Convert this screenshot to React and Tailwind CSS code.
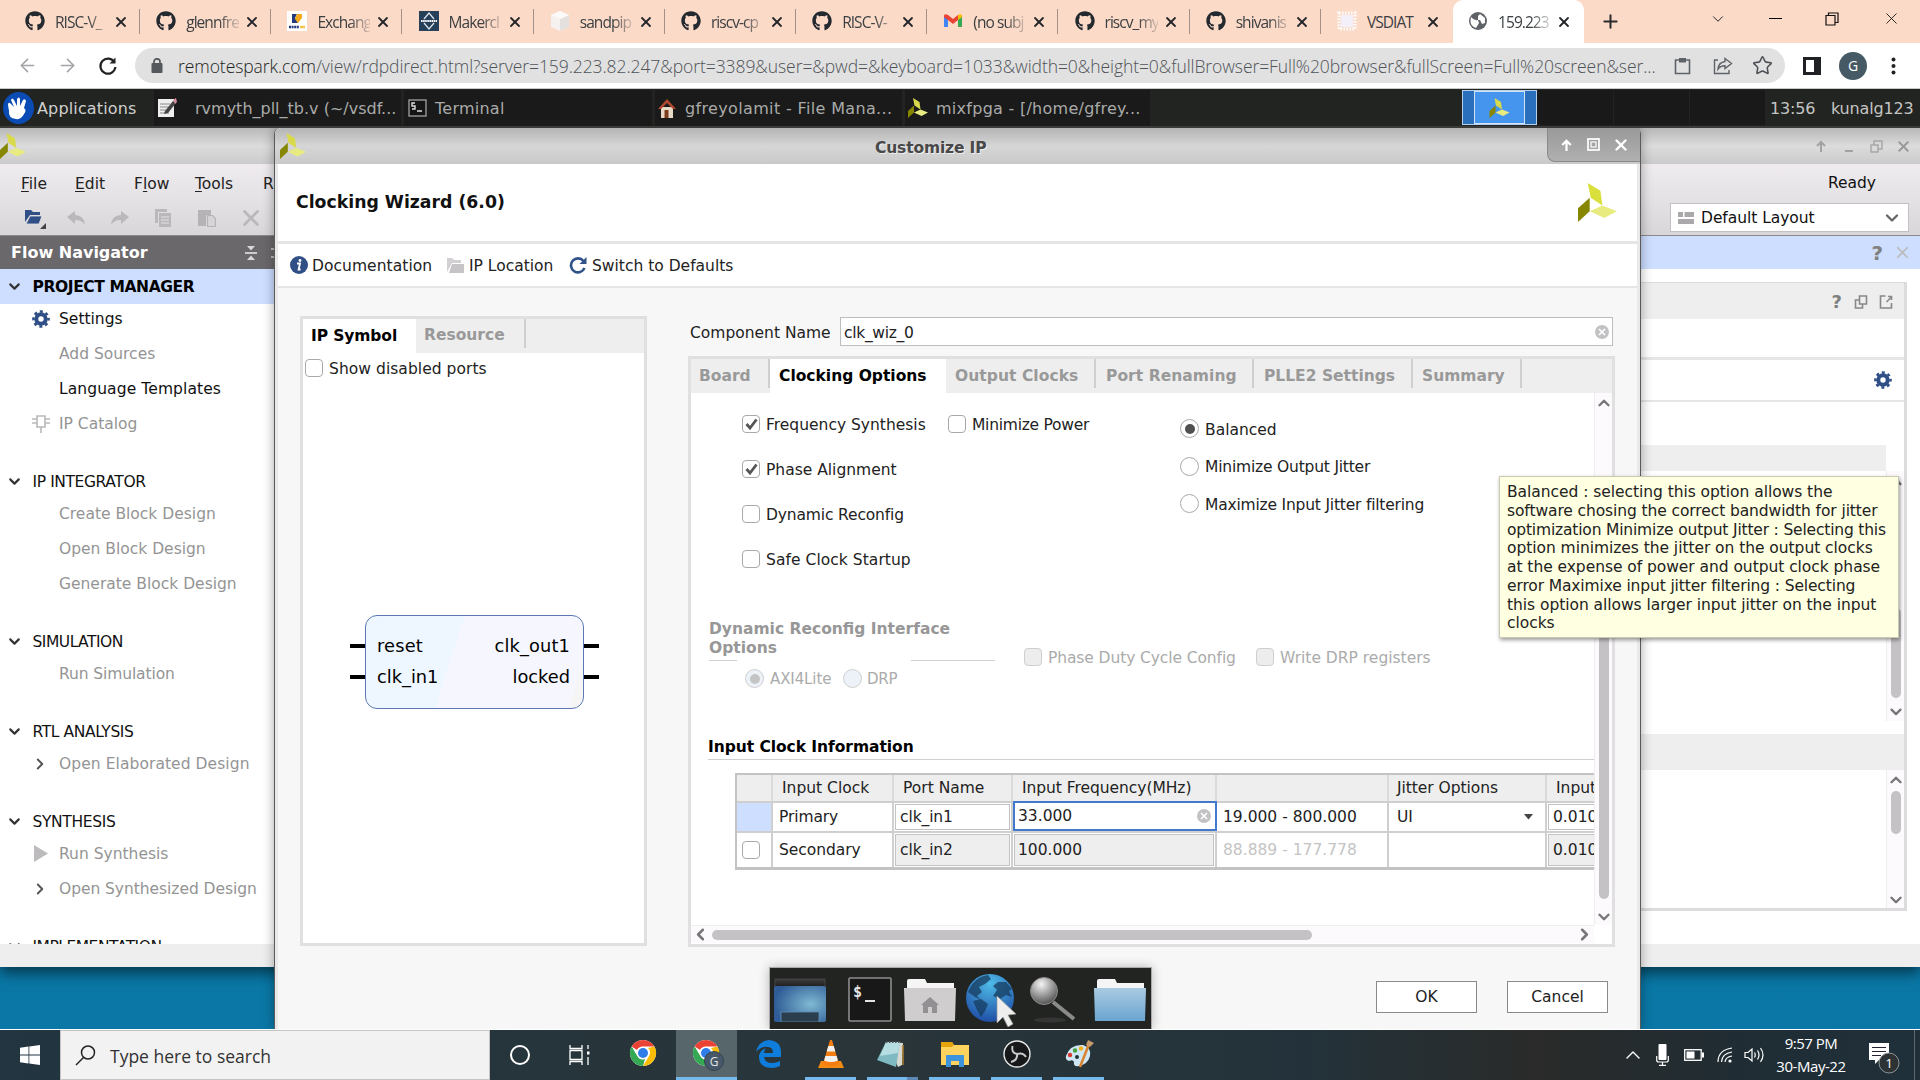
import React from "react";
import { FaGithub } from "react-icons/fa";
import { ChevronDown, ChevronUp, ChevronLeft, ChevronRight, X, Plus, ArrowLeft, ArrowRight, Star } from "lucide-react";

/* ---------- Browser chrome ---------- */

function Favicon({ kind }) {
  if (kind === "github") return <FaGithub size={20} color="#24292f" />;
  if (kind === "risc")
    return (
      <svg width="20" height="20" viewBox="0 0 20 20">
        <rect width="20" height="20" fill="#fff" />
        <path d="M5 3h5l-2 4 3 5H5z" fill="#233a7c" />
        <path d="M10 3h5v4l-4 5-3-4z" fill="#f6a81c" />
        <path d="M2 16h10" stroke="#233a7c" strokeWidth="2.4" strokeDasharray="2 .6" />
        <path d="M13 16h5" stroke="#f6c14c" strokeWidth="2.4" />
      </svg>
    );
  if (kind === "maker")
    return (
      <svg width="20" height="20" viewBox="0 0 20 20">
        <rect width="20" height="20" fill="#26405a" />
        <path d="M5 8l5-6 5 6M5 12l5 6 5-6" fill="none" stroke="#dfe7ee" strokeWidth="1.2" />
        <path d="M2 10h16" stroke="#fff" strokeWidth="1.8" strokeDasharray="1.6 .5" />
      </svg>
    );
  if (kind === "box")
    return (
      <svg width="20" height="20" viewBox="0 0 20 20">
        <path d="M10 0l9 4v12l-9 4-9-4V4z" fill="#f4f1ef" />
        <path d="M10 8l9-4v12l-9 4z" fill="#e3e0de" />
        <path d="M10 0l9 4-9 4-9-4z" fill="#fbfaf9" />
      </svg>
    );
  if (kind === "gmail")
    return (
      <svg width="20" height="20" viewBox="0 0 20 20">
        <path d="M1 5v11h4V8z" fill="#4285f4" />
        <path d="M15 8v8h4V5z" fill="#34a853" />
        <path d="M15 4v5l4-3V4.500q-1-2-4-.5z" fill="#fbbc04" />
        <path d="M1 4.500q1-2 4-.5l5 4 5-4v5l-5 4-5-4-4-3z" fill="#ea4335" />
      </svg>
    );
  if (kind === "chip")
    return (
      <svg width="20" height="20" viewBox="0 0 20 20">
        <rect x="2" y="2" width="16" height="16" fill="none" stroke="#fff" strokeWidth="3" strokeDasharray="1.500 1.500" />
        <rect x="4" y="4" width="12" height="12" fill="#f3f0fa" />
      </svg>
    );
  return (
    <svg width="20" height="20" viewBox="0 0 20 20">
      <circle cx="10" cy="10" r="9" fill="#5f6368" />
      <path d="M3 6q3 4 7 3l1 3-3 5Q2 15 2.500 9zM12 3l5 4v5l-3 1-2-4h-2V5z" fill="#fff" />
    </svg>
  );
}

const TABS = [
  ["github", "RISC-V_"],
  ["github", "glennfre"],
  ["risc", "Exchang"],
  ["maker", "Makercl"],
  ["box", "sandpip"],
  ["github", "riscv-cp"],
  ["github", "RISC-V-"],
  ["gmail", "(no subj"],
  ["github", "riscv_my"],
  ["github", "shivanis"],
  ["chip", "VSDIAT"],
  ["globe", "159.223"],
];

function TabStrip() {
  return (
    <div className="flex h-[43px] bg-[#fcdac8] pl-[10px]">
      {TABS.map(([icon, label], i) => {
        const active = i === 11;
        return (
          <div key={i} className={`flex h-[43px] w-[131.2px] shrink-0 items-center pl-[15px] ${active ? "rounded-t-[10px] bg-white" : ""}`}>
            <span className="-mt-px"><Favicon kind={icon} /></span>
            <span className={`ml-[10px] w-[53px] overflow-hidden whitespace-nowrap font-['Open_Sans'] text-[15.5px] leading-[22px] tracking-[-0.95px] text-[#3c4043] ${i === 10 ? "" : "[mask-image:linear-gradient(to_right,#000_62%,rgba(0,0,0,0.15)_100%)]"}`}>{label}</span>
            <X className="ml-[5px]" size={16} strokeWidth={2.700} color="#24262a" />
            {i < 10 && <span className="ml-[10px] h-[25px] w-px bg-[#a39088]" />}
          </div>
        );
      })}
      <div className="flex h-[43px] grow items-center pl-[16px]">
        <Plus size={21} strokeWidth={2.300} color="#2b2b2b" />
        <div className="ml-auto flex items-center pr-[19px] pb-[6px]">
          <ChevronDown size={18} strokeWidth={1.300} color="#222" />
          <span className="ml-[42px] h-px w-[13px] bg-black" />
          <svg className="ml-[43px]" width="14" height="14" viewBox="0 0 14 14" fill="none" stroke="#111" strokeWidth="1.200">
            <path d="M1 3.500h9V13H1zM3.500 3.500V1H13v9.500h-3" />
          </svg>
          <X className="ml-[43px]" size={19} strokeWidth={1.100} color="#111" />
        </div>
      </div>
    </div>
  );
}

function AddressBar() {
  return (
    <div className="flex h-[46px] items-center border-b border-[#c9c9c9] bg-white">
      <ArrowLeft className="ml-[17px]" size={21} strokeWidth={1.800} color="#a2a4a7" />
      <ArrowRight className="ml-[19px]" size={21} strokeWidth={1.800} color="#a2a4a7" />
      <svg className="ml-[20px]" width="20" height="20" viewBox="0 0 20 20" fill="none" stroke="#222" strokeWidth="2.200">
        <path d="M16.500 6.500A7.500 7.500 0 1 0 17.400 11" />
        <path d="M17.500 1.500v6h-6z" fill="#222" stroke="none" />
      </svg>
      <div className="ml-[17px] flex h-[35px] w-[1650px] items-center rounded-full bg-[#e1e1e1]">
        <svg className="ml-[16px]" width="12" height="15" viewBox="0 0 12 15">
          <rect x="0.500" y="5" width="11" height="10" rx="1" fill="#55585c" />
          <path d="M3 6V3.800a3 3 0 0 1 6 0V6" fill="none" stroke="#55585c" strokeWidth="1.700" />
        </svg>
        <span className="ml-[15px] w-[1487px] pt-px whitespace-nowrap font-['Open_Sans'] text-[17.5px] leading-[26px] font-light tracking-[-0.07px] text-[#4f5358]">
          <span className="text-[#1d1f21]">remotespark.com</span>
          /view/rdpdirect.html?server=159.223.82.247&amp;port=3389&amp;user=&amp;pwd=&amp;keyboard=1033&amp;width=0&amp;height=0&amp;fullBrowser=Full%20browser&amp;fullScreen=Full%20screen&amp;ser...
        </span>
        <svg className="ml-[9px]" width="17" height="18" viewBox="0 0 17 18" fill="none" stroke="#5f6368" strokeWidth="1.600">
          <path d="M1.500 3h14v13.500h-14z" />
          <path d="M5 1h7v4.500H5z" fill="#5f6368" stroke="none" />
        </svg>
        <svg className="ml-[22px]" width="20" height="18" viewBox="0 0 20 18" fill="none" stroke="#5f6368" strokeWidth="1.400">
          <path d="M5 3H1.500v13.500H16V13" />
          <path d="M12 1.500l6.500 5-6.500 5V8.700Q7.500 8.500 5 12q.500-6.500 7-7.500z" />
        </svg>
        <Star className="ml-[19px]" size={21} strokeWidth={1.800} color="#4d5156" />
      </div>
      <svg className="ml-[18px]" width="18" height="18" viewBox="0 0 18 18">
        <rect width="18" height="18" fill="#1f2124" />
        <rect x="3" y="3" width="8" height="12" fill="#fff" />
      </svg>
      <span className="ml-[18px] flex size-[28px] items-center justify-center rounded-full bg-[#455a64] font-['Open_Sans'] text-[14px] leading-[18px] text-white">G</span>
      <svg className="ml-[24px]" width="5" height="18" viewBox="0 0 5 18" fill="#222">
        <circle cx="2.500" cy="2.500" r="2" /><circle cx="2.500" cy="9" r="2" /><circle cx="2.500" cy="15.500" r="2" />
      </svg>
    </div>
  );
}

/* ---------- Remote desktop panel ---------- */

function VivadoLogo({ w, h, dim }) {
  return (
    <svg width={w} height={h} viewBox="0 0 40 40">
      <path d="M10 0l13 8 2 15-12-8z" fill={dim ? "#d8da4c" : "#d9e03b"} />
      <path d="M0 26l12-11v14L0 40z" fill="#868600" />
      <path d="M12 29l13-6 15 6-13 7z" fill="#e8ec80" />
    </svg>
  );
}

function PanelButton({ icon, label, className, textClass }) {
  return (
    <div className={`flex h-[36px] items-center bg-[#191a19] ${className}`}>
      {icon}
      <span className={`pt-[2px] leading-[20px] whitespace-nowrap ${textClass}`}>{label}</span>
    </div>
  );
}

function XfcePanel() {
  return (
    <div className="flex h-[39px] items-center border-b-2 border-[#3a3a39] bg-[#222421] text-[16px] text-[#a9aaa9]">
      <svg className="ml-[3px]" width="31" height="32" viewBox="0 0 31 32">
        <ellipse cx="15.500" cy="16" rx="15.500" ry="16" fill="#0a4bb4" />
        <path d="M5 13q0-3 2-2l4 4-3-7q1-3 3 0l3 6V7q2-3 3 0v7l3-6q2-2 3 1l-2 7q3 2 0 6-3 6-8 5-8-1-7-8z" fill="#fff" />
      </svg>
      <span className="ml-[3px] w-[103px] pt-[2px] text-[16px] leading-[20px] tracking-[0.15px] text-[#cfd0cf]">Applications</span>
      <PanelButton
        className="ml-[14px] w-[247px]"
        textClass="ml-[18px]"
        label="rvmyth_pll_tb.v (~/vsdf..."
        icon={
          <svg className="ml-[3px]" width="20" height="21" viewBox="0 0 20 21">
            <rect x="1" y="2" width="16" height="18" fill="#eee" />
            <path d="M3 7h10M3 10h10M3 13h8M3 16h9" stroke="#888" strokeWidth="1.200" />
            <path d="M8 14l8-10 3 2-8 10-4 1z" fill="#444" />
            <path d="M16 3l3-2 1 4-2 2z" fill="#d88fa2" />
          </svg>
        }
      />
      <PanelButton
        className="ml-[3px] w-[248px]"
        textClass="ml-[8px] tracking-[0.25px]"
        label="Terminal"
        icon={
          <svg className="ml-[4px]" width="19" height="18" viewBox="0 0 19 18">
            <rect x="1" y="1" width="17" height="16" fill="#151515" stroke="#999" strokeWidth="1.400" />
            <path d="M7 4H4v3h3v3H4M9 12h5" fill="none" stroke="#ddd" strokeWidth="1.400" />
          </svg>
        }
      />
      <PanelButton
        className="ml-[3px] w-[247px]"
        textClass="ml-[9px] tracking-[0.35px]"
        label="gfreyolamit - File Mana..."
        icon={
          <svg className="ml-[3px]" width="18" height="20" viewBox="0 0 18 20">
            <path d="M3 9h12v11H3z" fill="#e7d9c5" />
            <path d="M9 1l9 10h-3L9 5l-6 6H0z" fill="#b0482f" />
            <path d="M6.500 12h4v8h-4z" fill="#7c3d1e" />
          </svg>
        }
      />
      <PanelButton
        className="ml-[3px] w-[245px]"
        textClass="ml-[8px] tracking-[0.27px]"
        label="mixfpga - [/home/gfrey..."
        icon={<span className="ml-[3px]"><VivadoLogo w={20} h={20} dim /></span>}
      />
      <div className="ml-[312px] flex h-[35px]">
        <div className="flex w-[75px] justify-center border border-[#b4d0ee] bg-[#2a6fbb] px-[11px]">
          <div className="flex w-full items-center justify-center border border-[#d4e3f4] bg-[#4595ef]">
            <VivadoLogo w={21} h={20} dim />
          </div>
        </div>
        <div className="w-[76px] bg-[#181918]" />
        <div className="ml-px w-[75px] bg-[#181918]" />
        <div className="ml-px w-[75px] bg-[#181918]" />
      </div>
      <span className="ml-[5px] w-[61px] pt-[2px] text-[16px] tracking-[-0.15px] text-[#c4c5c4]">13:56</span>
      <span className="pt-[2px] text-[16px] leading-[20px] tracking-[-0.15px] text-[#c4c5c4]">kunalg123</span>
    </div>
  );
}

/* ---------- Vivado main window ---------- */

function NavHeader({ children, first }) {
  return (
    <div className={`flex h-[35px] shrink-0 items-center pl-[6px] ${first ? "bg-[#cddeff]" : "mt-[23px]"}`}>
      <ChevronDown size={17} strokeWidth={3} color="#333" />
      <span className={`ml-[9.5px] pt-[2px] whitespace-nowrap ${first ? "font-bold text-[15.5px] tracking-[-0.4px] text-black" : "text-[15.5px] tracking-[-0.5px] text-[#111]"}`}>{children}</span>
    </div>
  );
}

function NavItem({ children, icon, on, first }) {
  return (
    <div className={`flex h-[35px] shrink-0 items-center ${first ? "-mt-[3px]" : ""}`}>
      <span className="flex w-[59px] justify-end pr-[9px]">{icon}</span>
      <span className={`pt-[2px] leading-[19px] whitespace-nowrap text-[15.5px] ${on ? "text-[#111]" : "text-[#949494]"}`}>{children}</span>
    </div>
  );
}

function Gear() {
  return (
    <svg width="18" height="18" viewBox="0 0 18 18">
      <circle cx="9" cy="9" r="4.700" fill="none" stroke="#2f4f86" strokeWidth="4" />
      <circle cx="9" cy="9" r="7.500" fill="none" stroke="#2f4f86" strokeWidth="2.600" strokeDasharray="2.950 2.940" strokeDashoffset="1.400" />
    </svg>
  );
}

const Expander = () => <ChevronRight className="mr-px" size={18} strokeWidth={2.500} color="#555" />;

function FlowNavigator() {
  return (
    <div className="flex h-[732px] w-[276px] flex-col">
      <div className="flex h-[34px] shrink-0 items-center border-t border-[#8c8a8c] bg-[#6a686a]">
        <span className="ml-[11px] w-[234px] text-[16px] leading-[20px] font-bold text-white">Flow Navigator</span>
        <svg width="12" height="14" viewBox="0 0 12 14">
          <path d="M0 7h12" stroke="#d8d8d8" strokeWidth="1.800" />
          <path d="M2 0h8L6 4.500zM2 14h8L6 9.500z" fill="#d8d8d8" />
        </svg>
        <span className="ml-[14px] h-[10px] w-[3px] border-y-2 border-[#bbb]" />
      </div>
      <div className="flex h-[675px] shrink-0 flex-col overflow-hidden bg-white">
        <NavHeader first>PROJECT MANAGER</NavHeader>
        <NavItem first on icon={<Gear />}>Settings</NavItem>
        <NavItem>Add Sources</NavItem>
        <NavItem on><span className="tracking-[0.1px]">Language Templates</span></NavItem>
        <NavItem
          icon={
            <svg width="18" height="18" viewBox="0 0 18 18" fill="none" stroke="#b9b9b9" strokeWidth="1.600">
              <path d="M5 1h8v11H5zM0 4h5M0 8h5M13 4h5M13 8h5M9 12v6" />
            </svg>
          }
        >IP Catalog</NavItem>
        <NavHeader><span className="tracking-[-0.4px]">IP INTEGRATOR</span></NavHeader>
        <NavItem first>Create Block Design</NavItem>
        <NavItem>Open Block Design</NavItem>
        <NavItem>Generate Block Design</NavItem>
        <NavHeader>SIMULATION</NavHeader>
        <NavItem first><span className="tracking-[-0.1px]">Run Simulation</span></NavItem>
        <NavHeader><span className="tracking-[-0.4px]">RTL ANALYSIS</span></NavHeader>
        <NavItem first icon={<Expander />}><span className="tracking-[0.07px]">Open Elaborated Design</span></NavItem>
        <NavHeader><span className="tracking-[-0.35px]">SYNTHESIS</span></NavHeader>
        <NavItem first icon={<svg className="mr-[2px]" width="14" height="17" viewBox="0 0 14 17"><path d="M0 0l14 8.500L0 17z" fill="#bdbbbd" /></svg>}>Run Synthesis</NavItem>
        <NavItem icon={<Expander />}><span className="tracking-[-0.05px]">Open Synthesized Design</span></NavItem>
        <NavHeader>IMPLEMENTATION</NavHeader>
      </div>
      <div className="h-[23px] shrink-0 bg-[#eeeeee]" />
    </div>
  );
}

function MainWindowRight() {
  return (
    <div className="flex h-[732px] w-[279px] flex-col bg-white">
      <div className="flex h-[34px] shrink-0 items-center justify-end border-t border-[#8c8a8c] bg-[#cddeff] pr-[8px]">
        <span className="text-[20px] font-bold text-[#808080]">?</span>
        <X className="ml-[10px]" size={19} strokeWidth={2.200} color="#bbb" />
      </div>
      <div className="mt-[13px] mr-[13px] flex h-[629px] shrink-0 flex-col border-t border-r-[3px] border-b-[3px] border-[#dcdcdc]">
        <div className="flex h-[36px] shrink-0 items-center justify-end bg-[#eeeeee] pt-px pr-[11px] text-[#808080]">
          <span className="text-[18px] font-bold">?</span>
          <svg className="ml-[12px]" width="14" height="14" viewBox="0 0 13 14" fill="none" stroke="#888" strokeWidth="1.600">
            <path d="M5 1h7v8H5zM5 5H1v8h7V9" />
          </svg>
          <svg className="ml-[11px]" width="14" height="14" viewBox="0 0 13 14" fill="none" stroke="#888" strokeWidth="1.600">
            <path d="M6 1H1v12h11V8M7 7l5-5M8.500 1.500H12V5" />
          </svg>
        </div>
        <div className="h-[38px] shrink-0 bg-white" />
        <div className="flex h-[45px] shrink-0 items-center justify-end border-t-[3px] border-b-2 border-[#e6e6e6] pr-[12px]">
          <Gear />
        </div>
        <div className="mt-[43px] mr-[18px] h-[26px] shrink-0 bg-[#eeeeee]" />
        <div className="flex h-[250px] shrink-0 justify-end">
          <div className="flex w-[18px] flex-col items-center border-l border-[#eee] bg-[#fcfafc]">
            <ChevronUp className="mt-[2px]" size={18} strokeWidth={3.200} color="#777" />
            <span className="mt-[117px] h-[92px] w-[10px] rounded-full bg-[#c4c2c5]" />
            <ChevronDown className="mt-[5px]" size={18} strokeWidth={3.200} color="#777" />
          </div>
        </div>
        <div className="mt-[13px] h-[36px] shrink-0 bg-[#eeeeee]" />
        <div className="flex grow justify-end">
          <div className="flex w-[18px] flex-col items-center border-l border-[#eee] bg-[#fcfafc]">
            <ChevronUp className="mt-px" size={18} strokeWidth={3.200} color="#777" />
            <span className="mt-[2px] h-[43px] w-[10px] rounded-full bg-[#c4c2c5]" />
            <ChevronDown className="mt-auto -mb-px" size={18} strokeWidth={3.200} color="#777" />
          </div>
        </div>
      </div>
      <div className="mt-auto h-[23px] shrink-0 bg-[#eeeeee]" />
    </div>
  );
}

const MENUS = [
  ["F", "ile", "", "w-[54px]"],
  ["E", "dit", "", "w-[59px]"],
  ["l", "ow", "F", "w-[61px]"],
  ["T", "ools", "", "w-[68px]"],
  ["R", "", "", "w-[20px] no-underline"],
];

function ToolIcons() {
  return (
    <div className="flex items-center">
      <svg width="24" height="24" viewBox="0 0 24 24">
        <path d="M1 16V4h6l2 2h7v3H6z" fill="#2f4f86" />
        <path d="M6 10h12l-3 8H2z" fill="#2f4f86" stroke="#e4e2e4" strokeWidth=".8" />
        <path d="M22 17v6h-6z" fill="#444" />
      </svg>
      <svg className="ml-[19px]" width="18" height="14" viewBox="0 0 18 14"><path d="M0 6l8-6v4q9 0 10 10-3-5-10-5v4z" fill="#bab8ba" /></svg>
      <svg className="ml-[26px]" width="18" height="14" viewBox="0 0 18 14"><path d="M18 6l-8-6v4Q1 4 0 14q3-5 10-5v4z" fill="#bab8ba" /></svg>
      <svg className="ml-[26px]" width="17" height="18" viewBox="0 0 17 18"><path d="M0 0h12v3H3v11H0z" fill="#bab8ba" /><path d="M4 4h12v14H4z" fill="#bab8ba" /><path d="M6 8h8M6 11h8M6 14h8" stroke="#e4e2e4" strokeWidth="1" /></svg>
      <svg className="ml-[26px]" width="18" height="18" viewBox="0 0 18 18"><path d="M0 1h13v5H8v11H0z" fill="#b5b3b5" /><path d="M9.500 6.500h5l3 3v8h-8z" fill="#d6d4d6" stroke="#b5b3b5" strokeWidth="1.200" /></svg>
      <X className="ml-[22px]" size={26} strokeWidth={2.600} color="#bab8ba" />
    </div>
  );
}

function MainWindow() {
  return (
    <div className="absolute top-0 left-0 flex h-[839px] w-[1920px] flex-col shadow-[0_6px_14px_rgba(0,0,0,0.55)]">
      <div className="flex h-[36px] shrink-0 items-center bg-gradient-to-b from-[#b8b8b8] via-[#dcdcdc] to-[#cbcbcb]">
        <VivadoLogo w={26} h={26} dim />
        <div className="ml-auto flex items-center pr-[8px]">
          <svg width="10" height="12" viewBox="0 0 10 12" fill="none" stroke="#a2a2a2" strokeWidth="2"><path d="M5 12V2M1 6l4-4 4 4" /></svg>
          <span className="mt-[9px] ml-[19px] h-[2px] w-[8px] bg-[#a2a2a2]" />
          <svg className="ml-[17px]" width="13" height="13" viewBox="0 0 13 13" fill="none" stroke="#a8a8a8" strokeWidth="1.500"><path d="M1 5h7v7H1zM4 5V1h8v8H8" /></svg>
          <X className="ml-[12px]" size={17} strokeWidth={2.800} color="#999" />
        </div>
      </div>
      <div className="flex h-[71px] shrink-0 justify-between bg-gradient-to-b from-[#efebef] via-[#e4e2e4] to-[#d8d6d8]">
        <div className="flex w-[276px] flex-col overflow-hidden">
          <div className="flex h-[38px] items-center pt-[2px] pl-[21px] text-[15.5px] leading-[20px] text-[#222]">
            {MENUS.map(([u, rest, pre, w]) => (
              <span key={u} className={`shrink-0 ${w}`}>{pre}{rest ? <u className="underline-offset-2">{u}</u> : u}{rest}</span>
            ))}
          </div>
          <div className="flex h-[32px] items-center pl-[24px]"><ToolIcons /></div>
        </div>
        <div className="flex w-[250px] flex-col items-end">
          <span className="mt-[8px] mr-[44px] text-[15.5px] leading-[22px] text-[#111]">Ready</span>
          <div className="mt-[9px] mr-[11px] flex h-[29px] w-[239px] items-center border border-[#c2c0c2] bg-white">
            <svg className="ml-[7px]" width="16" height="12" viewBox="0 0 16 12" fill="#aaa8aa"><path d="M0 0h5v5H0zM6.500 0H16v5H6.500zM0 7h16v5H0z" /></svg>
            <span className="ml-[7px] pt-px text-[15.5px] leading-[20px] tracking-[-0.05px] text-[#111]">Default Layout</span>
            <ChevronDown className="mr-[6px] ml-auto" size={20} strokeWidth={2.800} color="#666" />
          </div>
        </div>
      </div>
      <div className="flex justify-between bg-white">
        <FlowNavigator />
        <MainWindowRight />
      </div>
    </div>
  );
}

/* ---------- Customize IP dialog ---------- */

function Check({ on, off }) {
  return (
    <span className={`flex size-[18px] shrink-0 items-center justify-center rounded-[4px] border-[1.5px] ${off ? "border-[#cfcfcf] bg-[#ededed]" : "border-[#a9a9a9] bg-white"}`}>
      {on && <svg width="13" height="12" viewBox="0 0 13 12"><path d="M1.500 6l3.500 4 6.500-8.500" fill="none" stroke="#555" strokeWidth="2.800" /></svg>}
    </span>
  );
}

function Radio({ on, off }) {
  return (
    <span className={`flex size-[19px] shrink-0 items-center justify-center rounded-full border-[1.5px] ${off ? "border-[#cfcfcf] bg-[#edf1f8]" : "border-[#a9a9a9] bg-white"}`}>
      {on && <span className={`size-[10px] rounded-full ${off ? "bg-[#c4c4c4]" : "bg-[#505050]"}`} />}
    </span>
  );
}

function ClearIcon() {
  return (
    <svg width="14" height="14" viewBox="0 0 14 14">
      <circle cx="7" cy="7" r="7" fill="#c2c2c4" />
      <path d="M4 4l6 6M10 4l-6 6" stroke="#fff" strokeWidth="1.700" />
    </svg>
  );
}

function IpSymbolPanel() {
  return (
    <div className="flex h-[630px] w-[347px] shrink-0 flex-col border-[3px] border-[#e0e0e0] bg-white">
      <div className="flex h-[34px] shrink-0 bg-[#eeeeee] text-[15.5px] font-bold">
        <span className="flex w-[113px] items-center bg-white pt-px pl-[8px] tracking-[-0.1px] text-black">IP Symbol</span>
        <span className="mb-[5px] flex w-[110px] items-center border-r-2 border-[#cfcfcf] pt-[5px] pl-[8px] text-[#999]">Resource</span>
      </div>
      <div className="mt-[5px] flex h-[20px] items-center pl-[2px] text-[15.5px] text-[#222]">
        <Check /><span className="ml-[6px] pt-[2px] leading-[20px] tracking-[0.05px]">Show disabled ports</span>
      </div>
      <div className="mt-[237px] flex items-center justify-center pl-[2px] text-[17.8px] text-black">
        <Stubs />
        <div className="flex h-[94px] w-[219px] justify-between rounded-[12px] border-[1.5px] border-[#5b78b4] bg-[linear-gradient(108deg,#eef6ff_0%,#eef6ff_40%,#f6f7fe_40%,#f6f7fe_94%,#f5f5f6_94%)] px-[11px] pt-[15px] leading-[30.5px]">
          <div className="flex flex-col"><span className="tracking-[0.2px]">reset</span><span>clk_in1</span></div>
          <div className="flex flex-col items-end pr-[2px]"><span className="tracking-[0.15px]">clk_out1</span><span>locked</span></div>
        </div>
        <Stubs />
      </div>
    </div>
  );
}

function Stubs() {
  return (
    <div className="flex h-[94px] w-[15px] flex-col gap-[27px] pt-[29px]">
      <span className="h-[4px] bg-black" />
      <span className="h-[4px] bg-black" />
    </div>
  );
}

const OPTION_TABS = [
  ["Board", "w-[79px] pl-[8px]"],
  ["Clocking Options", ""],
  ["Output Clocks", "w-[150px] pl-[9px] tracking-[0.05px]"],
  ["Port Renaming", "w-[158px] pl-[10px] tracking-[0.05px]"],
  ["PLLE2 Settings", "w-[159px] pl-[10px]"],
  ["Summary", "w-[109px] pl-[9px]"],
];

function ClockTable() {
  const th = "flex h-[26px] items-center border-r-2 border-[#dadada] whitespace-nowrap bg-[#eeeeee]";
  const td1 = "flex h-[30px] items-center border-t-2 border-r-2 border-[#cfcfcf] whitespace-nowrap";
  const td2 = "flex h-[36px] items-center border-t-2 border-r-2 border-[#cfcfcf] whitespace-nowrap";
  return (
    <div className="ml-[44px] grid w-[900px] grid-cols-[36px_121px_119px_204px_172px_158px_120px] border-t-2 border-b-[3px] border-l-2 border-[#c3c3c3] text-[15.5px] leading-[20px] text-[#222]">
      <div className={th} />
      <div className={`${th} pl-[9px]`}>Input Clock</div>
      <div className={`${th} pl-[9px]`}>Port Name</div>
      <div className={`${th} pl-[9px] tracking-[-0.05px]`}>Input Frequency(MHz)</div>
      <div className={th} />
      <div className={`${th} pl-[8px] tracking-[-0.05px]`}>Jitter Options</div>
      <div className={`${th} pl-[9px]`}>Input Jitter</div>

      <div className={`${td1} bg-[#cddeff]`} />
      <div className={`${td1} pl-[6px] tracking-[-0.1px]`}>Primary</div>
      <div className={`${td1} p-px`}><span className="flex h-[26px] w-full items-center overflow-hidden border border-[#c3c3c3] pl-[4px] tracking-[-0.1px]">clk_in1</span></div>
      <div className="flex h-[30px]">
        <div className="flex h-[30px] w-full items-center border-[2.500px] border-[#4279cf] pr-[4px] pl-[3px]">33.000<span className="ml-auto"><ClearIcon /></span></div>
      </div>
      <div className={`${td1} pl-[6px]`}>19.000 - 800.000</div>
      <div className={`${td1} pl-[8px]`}>UI<svg className="mr-[12px] ml-auto" width="9" height="6" viewBox="0 0 9 6"><path d="M0 0h9L4.500 5.500z" fill="#444" /></svg></div>
      <div className={`${td1} p-px`}><span className="flex h-[26px] w-full items-center border border-[#c3c3c3] pl-[4px]">0.010</span></div>

      <div className={`${td2} pl-[5px]`}><Check /></div>
      <div className={`${td2} pl-[6px] tracking-[-0.05px]`}>Secondary</div>
      <div className={`${td2} p-px`}><span className="flex h-[32px] w-full items-center border-[1.5px] border-[#c3c3c3] bg-[#eee] pl-[4px] tracking-[-0.1px]">clk_in2</span></div>
      <div className={`${td2} p-px`}><span className="flex h-[32px] w-full items-center border-[1.5px] border-[#c3c3c3] bg-[#eee] pl-[3px]">100.000</span></div>
      <div className={`${td2} pl-[6px] text-[#c4c4c4]`}>88.889 - 177.778</div>
      <div className={td2} />
      <div className={`${td2} p-px`}><span className="flex h-[32px] w-full items-center border-[1.5px] border-[#c3c3c3] bg-[#eee] pl-[4px]">0.010</span></div>
    </div>
  );
}

function OptionsForm() {
  return (
    <div className="flex h-[532px] w-[903px] flex-col overflow-hidden text-[15.5px] text-[#222]">
      <div className="flex h-[189px] shrink-0 pt-[8px]">
        <div className="grid h-[180px] w-[438px] grid-cols-[206px_1fr] grid-rows-4 content-start pl-[51px]">
          <Option mark={<Check on />}>Frequency Synthesis</Option>
          <Option mark={<Check />}><span className="tracking-[-0.25px]">Minimize Power</span></Option>
          <Option mark={<Check on />} full>Phase Alignment</Option>
          <Option mark={<Check />} full><span className="tracking-[-0.15px]">Dynamic Reconfig</span></Option>
          <Option mark={<Check />} full><span className="tracking-[0.05px]">Safe Clock Startup</span></Option>
        </div>
        <div className="mt-[9px] ml-[51px] flex flex-col leading-[20px]">
          <div className="flex h-[37.5px] items-center"><Radio on /><span className="ml-[6px] pt-[2px]">Balanced</span></div>
          <div className="flex h-[37.5px] items-center"><Radio /><span className="ml-[6px] pt-[2px] tracking-[-0.2px]">Minimize Output Jitter</span></div>
          <div className="flex h-[37.5px] items-center"><Radio /><span className="ml-[6px] pt-[2px] tracking-[-0.2px]">Maximize Input Jitter filtering</span></div>
        </div>
      </div>
      <div className="mt-[38px] flex h-[75px] shrink-0 pl-[18px] text-[#ababab]">
        <div className="flex w-[286px] flex-col">
          <span className="leading-[19px] font-bold text-[#979797]">Dynamic Reconfig Interface<br />Options</span>
          <div className="mt-[2px] flex justify-between"><span className="h-px w-[28px] bg-[#cfcfcf]" /><span className="h-px w-[84px] bg-[#cfcfcf]" /></div>
          <div className="mt-[8px] flex items-center pl-[36px] text-[15px]">
            <Radio on off /><span className="ml-[6px] w-[73px] pt-[2px] tracking-[-0.1px]">AXI4Lite</span>
            <Radio off /><span className="ml-[5px] pt-[2px] tracking-[-0.2px]">DRP</span>
          </div>
        </div>
        <div className="ml-[29px] flex h-[74px] items-center leading-[20px]">
          <Check off /><span className="ml-[6px] w-[208px] pt-[2px] whitespace-nowrap tracking-[-0.1px]">Phase Duty Cycle Config</span>
          <Check off /><span className="ml-[6px] pt-[2px] whitespace-nowrap">Write DRP registers</span>
        </div>
      </div>
      <div className="mt-[43px] ml-[17px] h-[22px] shrink-0 border-b border-[#cfcfcf] leading-[18px] font-bold tracking-[-0.05px] text-black">Input Clock Information</div>
      <div className="mt-[13px] shrink-0"><ClockTable /></div>
    </div>
  );
}

function Option({ mark, children, full }) {
  return (
    <div className={`flex h-[45px] items-center whitespace-nowrap ${full ? "col-span-2" : ""}`}>
      {mark}<span className="ml-[6px] pt-[2px] leading-[20px]">{children}</span>
    </div>
  );
}

function OptionsPanel() {
  return (
    <div className="flex h-[591px] w-[927px] flex-col border-[3px] border-[#e0e0e0] bg-white">
      <div className="flex h-[34px] shrink-0 bg-[#eeeeee] text-[15.5px] leading-[20px] font-bold text-[#999]">
        {OPTION_TABS.map(([label, cls]) =>
          label === "Clocking Options" ? (
            <span key={label} className="flex w-[176px] items-center bg-white pl-[9px] text-black">{label}</span>
          ) : (
            <span key={label} className={`mb-[5px] flex items-center border-r-2 border-[#cfcfcf] pt-[5px] whitespace-nowrap ${cls}`}>{label}</span>
          )
        )}
      </div>
      <div className="flex h-[532px] shrink-0">
        <OptionsForm />
        <div className="flex w-[18px] flex-col items-center border-l border-[#eee] bg-[#fcfafc]">
          <ChevronUp className="mt-px" size={18} strokeWidth={3.200} color="#777" />
          <span className="mt-[199px] h-[288px] w-[10px] rounded-full bg-[#c4c2c5]" />
          <ChevronDown className="mt-auto -mb-px" size={18} strokeWidth={3.200} color="#777" />
        </div>
      </div>
      <div className="flex h-[18px] w-[903px] items-center border-t border-[#eee] bg-[#fcfafc]">
        <ChevronLeft size={19} strokeWidth={3.200} color="#777" />
        <span className="ml-[2px] h-[10px] w-[600px] rounded-full bg-[#c4c2c5]" />
        <ChevronRight className="ml-auto" size={19} strokeWidth={3.200} color="#777" />
      </div>
    </div>
  );
}

function Dialog() {
  return (
    <div className="absolute top-0 left-[274px] flex h-[901px] w-[1367px] flex-col rounded-t-[6px] border-x border-[#5a5a5a] bg-[#f7f7f7] shadow-[0_0_12px_rgba(0,0,0,0.35)]">
      <div className="flex h-[36px] shrink-0 items-start rounded-t-[6px] bg-gradient-to-b from-[#b4b4b4] via-[#d6d6d6] to-[#c9c9c9]">
        <span className="mt-[5px] ml-[5px]"><VivadoLogo w={26} h={26} dim /></span>
        <span className="ml-[569px] pt-[8px] text-[15.5px] leading-[24px] font-bold tracking-[-0.15px] text-[#484848] [text-shadow:1px_1px_0_#eee]">Customize IP</span>
        <div className="ml-auto flex h-[34px] w-[93px] items-center rounded-bl-[8px] border-b border-l border-[#8a8a8a] bg-gradient-to-b from-[#999] to-[#b0b0b0] pl-[13px]">
          <svg width="11" height="12" viewBox="0 0 12 14" fill="none" stroke="#fff" strokeWidth="2.600"><path d="M6 14V3M1 7l5-5 5 5" /></svg>
          <svg className="ml-[15px]" width="13" height="13" viewBox="0 0 13 13" fill="none" stroke="#fff"><rect x="1" y="1" width="11" height="11" strokeWidth="1.700" /><rect x="4" y="4" width="5" height="5" strokeWidth="1.200" /></svg>
          <X className="ml-[12px]" size={18} strokeWidth={3.200} color="#fff" />
        </div>
      </div>
      <div className="flex grow flex-col border-x-[3px] border-[#e9e9e9]">
        <div className="flex h-[80px] shrink-0 items-center justify-between border-b-[3px] border-[#e5e5e5] bg-white pr-[20px] pl-[18px]">
          <span className="pb-px text-[17.3px] leading-[22px] font-bold text-[#111]">Clocking Wizard (6.0)</span>
          <VivadoLogo w={39} h={39} />
        </div>
        <div className="flex h-[44px] shrink-0 items-center border-b-2 border-[#e5e5e5] bg-white pl-[12px] text-[15.5px] leading-[20px] text-[#222]">
          <svg width="18" height="18" viewBox="0 0 18 18">
            <circle cx="9" cy="9" r="9" fill="#2f4f86" />
            <circle cx="10" cy="4.500" r="1.400" fill="#fff" />
            <path d="M7 7.500h3l-1.400 6h2" fill="none" stroke="#fff" strokeWidth="1.800" />
          </svg>
          <span className="ml-[4px] w-[135px] pt-[2px] tracking-[0.05px]">Documentation</span>
          <svg width="17" height="15" viewBox="0 0 17 15"><path d="M0 14V0h5l2 2h7v3H5z" fill="#d2d0d2" /><path d="M5 6h12v9H2z" fill="#c6c4c6" /></svg>
          <span className="ml-[5px] w-[100px] pt-[2px] tracking-[0px]">IP Location</span>
          <svg width="18" height="18" viewBox="0 0 18 18" fill="none" stroke="#2f5288" strokeWidth="2.600"><path d="M14.500 5A7 7 0 1 0 15.500 12" /><path d="M17.500 1v7h-7z" fill="#2f5288" stroke="none" /></svg>
          <span className="ml-[5px] pt-[2px]">Switch to Defaults</span>
        </div>
        <div className="flex pt-[28px] pl-[22px]">
          <IpSymbolPanel />
          <div className="ml-[41px] flex flex-col">
            <div className="mt-[1px] flex h-[29px] items-center text-[15.5px] leading-[20px] text-[#222]">
              <span className="w-[152px] pt-[2px] pl-[2px]">Component Name</span>
              <div className="flex h-[29px] w-[773px] items-center border border-[#bdbdbd] bg-white pr-[3px] pl-[3px]">
                <span className="pt-[2px] tracking-[-0.3px]">clk_wiz_0</span>
                <span className="ml-auto"><ClearIcon /></span>
              </div>
            </div>
            <div className="mt-[10px]"><OptionsPanel /></div>
          </div>
        </div>
        <div className="mt-[34px] flex justify-end gap-[30px] pr-[29px] text-[15.5px] text-[#222]">
          <span className="flex h-[32px] w-[101px] items-center justify-center border-[1.5px] border-[#8a8a8a] bg-white pt-[2px]">OK</span>
          <span className="flex h-[32px] w-[101px] items-center justify-center border-[1.5px] border-[#8a8a8a] bg-white pt-[2px]">Cancel</span>
        </div>
      </div>
    </div>
  );
}

function Tooltip() {
  return (
    <div className="absolute top-[348px] left-[1499px] h-[162px] w-[400px] border border-[#c9c9b4] bg-[#ffffe1] pt-[6px] pl-[7px] text-[15.5px] leading-[18.75px] tracking-[-0.05px] whitespace-nowrap text-[#222] shadow-[1px_2px_4px_rgba(0,0,0,0.4)]">
      Balanced : selecting this option allows the<br />
      <span className="tracking-[-0.1px]">software chosing the correct bandwidth for jitter</span><br />
      <span className="tracking-[-0.18px]">optimization Minimize output Jitter : Selecting this</span><br />
      option minimizes the jitter on the output clocks<br />
      at the expense of power and output clock phase<br />
      <span className="tracking-[-0.13px]">error Maximixe input jitter filtering : Selecting</span><br />
      this option allows larger input jitter on the input<br />
      clocks
    </div>
  );
}

/* ---------- Dock ---------- */

function Dock() {
  return (
    <div className="absolute top-[839px] left-[769px] flex h-[62px] w-[383px] items-center border border-b-0 border-[#aaa] bg-[#222421] pt-[2px] pl-[3px] shadow-[0_0_10px_rgba(0,0,0,0.25)]">
      <svg width="54" height="44" viewBox="0 0 54 44">
        <defs>
          <radialGradient id="desk" cx="70%" cy="50%" r="70%"><stop offset="0" stopColor="#7fb9d2" /><stop offset="1" stopColor="#2f5c96" /></radialGradient>
          <linearGradient id="bar" x1="0" y1="0" x2="0" y2="1"><stop offset="0" stopColor="#3c3d3c" /><stop offset="1" stopColor="#181918" /></linearGradient>
        </defs>
        <rect x="2" y="1" width="50" height="9" fill="url(#bar)" stroke="#444" />
        <rect x="1" y="8" width="52" height="36" rx="2" fill="url(#desk)" />
        <rect x="8" y="34" width="38" height="10" fill="#2b3e4d" stroke="#6290b5" strokeWidth=".8" />
      </svg>
      <svg className="ml-[21px]" width="44" height="45" viewBox="0 0 44 45">
        <rect x="1" y="1" width="42" height="43" rx="1" fill="#171817" stroke="#8d8d8d" strokeWidth="1.600" />
        <text x="5" y="20" fontFamily="DejaVu Sans Mono" fontWeight="bold" fontSize="15" fill="#e4e4e4">$</text>
        <path d="M17 24h10" stroke="#e4e4e4" strokeWidth="2" />
      </svg>
      <svg className="ml-[12px]" width="52" height="42" viewBox="0 0 52 42">
        <path d="M3 12V2q0-2 2-2h16l2 4h27v8z" fill="#f5f5f5" />
        <path d="M0 9h52l-1 33H1z" fill="#cfcdcd" />
        <path d="M26 18l9 8h-2v8h-5v-6h-4v6h-5v-8h-2z" fill="#929092" />
      </svg>
      <svg className="ml-[10px]" width="52" height="54" viewBox="0 0 52 54">
        <defs>
          <radialGradient id="globe" cx="50%" cy="20%" r="80%"><stop offset="0" stopColor="#4fbbe8" /><stop offset="1" stopColor="#1f4fa5" /></radialGradient>
        </defs>
        <circle cx="24" cy="25" r="24" fill="url(#globe)" />
        <path d="M2 19Q8 4 22 2l3 4-6 5-6 3 3 5-5 4 4 4-6-3zM7 28l8-2 7 5-3 7-4 6-4-7zM27 13l5-4 8 0 6 7-3 2 3 6-6-2-6 4-7-3 4-6z" fill="#153b5e" fillOpacity=".75" />
        <path d="M31 23l19 18-8 1 5 9-5 3-5-10-6 6z" fill="#eee" stroke="#999" strokeWidth=".7" />
      </svg>
      <svg className="ml-[10px]" width="48" height="46" viewBox="0 0 48 46">
        <defs>
          <radialGradient id="lens" cx="40%" cy="25%" r="75%"><stop offset="0" stopColor="#f4f4f4" /><stop offset="1" stopColor="#555" /></radialGradient>
        </defs>
        <path d="M25 25l21 17" stroke="#8a8a8a" strokeWidth="4" />
        <circle cx="16" cy="14" r="13.500" fill="url(#lens)" stroke="#8a8a8a" />
        <ellipse cx="22" cy="43" rx="16" ry="2.500" fill="#343534" />
      </svg>
      <svg className="ml-[18px]" width="52" height="42" viewBox="0 0 52 42">
        <defs>
          <linearGradient id="fold" x1="0" y1="0" x2="0" y2="1"><stop offset="0" stopColor="#aacbe2" /><stop offset="1" stopColor="#6aa5d0" /></linearGradient>
        </defs>
        <path d="M3 12V2q0-2 2-2h16l2 4h27v8z" fill="#f5f5f5" />
        <path d="M0 9h52l-1 33H1z" fill="url(#fold)" />
      </svg>
    </div>
  );
}

/* ---------- Host taskbar ---------- */

function Chrome({ badge }) {
  return (
    <svg width="34" height="34" viewBox="0 0 34 34">
      <g transform="translate(3 2)">
        <circle cx="13" cy="14" r="13" fill="#fff" />
        <path d="M13 1a13 13 0 0 1 11.300 6.500H13A6.500 6.500 0 0 0 7 11L1.700 7.500A13 13 0 0 1 13 1z" fill="#ea4335" />
        <path d="M24.300 7.500A13 13 0 0 1 13 27l6-10a6.500 6.500 0 0 0-1-8z" fill="#fbbc04" />
        <path d="M13 27A13 13 0 0 1 1.700 7.500L7.400 17.300A6.500 6.500 0 0 0 15 20z" fill="#34a853" />
        <circle cx="13" cy="14" r="6.300" fill="#fff" />
        <circle cx="13" cy="14" r="5" fill="#2f7de8" />
      </g>
      {badge && <><circle cx="24" cy="24" r="9.500" fill="#46586a" stroke="#35444c" /><text x="24" y="28.500" textAnchor="middle" fontFamily="Open Sans" fontSize="12" fill="#e6e6e6">G</text></>}
    </svg>
  );
}

function TaskApp({ children, className, line }) {
  return (
    <div className={`flex h-full flex-col items-center ${className}`}>
      <div className="flex grow items-center">{children}</div>
      <span className={`h-[3px] w-full ${line ? "bg-[#76b9ed]" : ""}`} />
    </div>
  );
}

function Taskbar() {
  return (
    <div className="flex h-[51px] items-center border-t border-white bg-[linear-gradient(to_right,#223540_0%,#293539_45%,#23323a_68%,#2a2b2a_80%,#1f2d35_92%,#20303a_100%)] font-['Open_Sans'] text-white">
      <svg className="ml-[20px]" width="20" height="20" viewBox="0 0 20 20" fill="#fff"><path d="M0 2.800l8.500-1.200v8H0zM9.300 1.500L20 0v9.600H9.300zM0 10.400h8.500v8L0 17.200zM9.300 10.400H20V20L9.300 18.500z" /></svg>
      <div className="ml-[20px] flex h-[50px] w-[430px] items-center border border-[#c4c4c4] bg-[#f2f2f2]">
        <svg className="ml-[14px]" width="21" height="21" viewBox="0 0 21 21" fill="none" stroke="#222" strokeWidth="1.500"><circle cx="13" cy="7.500" r="6.500" /><path d="M8.500 12.500L1 20" /></svg>
        <span className="ml-[14px] pt-[2px] text-[17.5px] leading-[24px] text-[#333]">Type here to search</span>
      </div>
      <div className="ml-[20px] size-[20px] rounded-full border-[2.500px] border-white" />
      <svg className="ml-[39px]" width="22" height="20" viewBox="0 0 22 20" fill="none" stroke="#fff" strokeWidth="1.300"><path d="M1 0v3.500h12V0M1 5.500h12v9H1zM1 20v-3.500h12V20M19 0v4M19 12v8" /><rect x="18" y="6.500" width="2.500" height="3" fill="#fff" stroke="none" /></svg>
      <TaskApp className="ml-[20px] w-[65px]"><Chrome /></TaskApp>
      <TaskApp className="w-[61px] bg-[#57666b]" line><Chrome badge /></TaskApp>
      <TaskApp className="w-[62px]">
        <svg width="25" height="28" viewBox="0 0 25 28"><path d="M0 12Q2 1 13 0q12 1 12 12v5H8q1 6 8 6 4 0 8-2v5q-4 2-9 2Q3 27 3 17q0-6 7-9-2 2-2 5h9q0-6-5-6Q5 6 0 12z" fill="#0f7ddb" /></svg>
      </TaskApp>
      <TaskApp className="ml-[6px] w-[51px]" line>
        <svg width="26" height="28" viewBox="0 0 26 28"><path d="M3 21h20l3 7H0z" fill="#f28a13" /><path d="M12 0h2l7 24q-8 4-16 0z" fill="#f57c10" /><path d="M10.300 6h5.400l1.600 5.500H8.700zM7.400 16h11.200l1.300 4.500q-7 3-13.800 0z" fill="#f1f1f1" /></svg>
      </TaskApp>
      <TaskApp className="ml-[11px] w-[40px]" line>
        <svg className="ml-[8px]" width="28" height="28" viewBox="0 0 28 28"><path d="M10 2l16 1-1 22-4 2z" fill="#d8d8d0" /><path d="M9 2h14l-4 25L0 20z" fill="#7fb9c2" /><path d="M9 2h14l-2 11-18 3z" fill="#b6dde2" /><path d="M9 2h14" stroke="#555" strokeWidth="2" strokeDasharray="1.500 1.500" /><path d="M26 5v20" stroke="#a87b2c" strokeWidth="1.500" /></svg>
      </TaskApp>
      <span className="mt-auto h-[3px] w-[11px] bg-[#5d8ab5]" />
      <TaskApp className="ml-[11px] w-[51px]" line>
        <svg width="28" height="26" viewBox="0 0 28 26"><path d="M0 1h11l2 3h15v20H0z" fill="#ffd45e" /><path d="M0 1h11l2 3-2 2H0z" fill="#e3a30c" /><path d="M5 26V14h18v12h-5v-6h-8v6z" fill="#3d94dd" /></svg>
      </TaskApp>
      <TaskApp className="ml-[11px] w-[51px]" line>
        <svg width="28" height="28" viewBox="0 0 28 28"><circle cx="14" cy="14" r="13" fill="#17181a" stroke="#e8e8e8" strokeWidth="1.400" /><g fill="none" stroke="#c9c9c9" strokeWidth="2"><path d="M14 14q-6-1-4.500-8" /><path d="M14 14q6-2 9 3" /><path d="M14 14q1 6-6 8" /></g></svg>
      </TaskApp>
      <TaskApp className="ml-[11px] w-[51px]" line>
        <svg width="30" height="28" viewBox="0 0 30 28"><path d="M2 16Q6 4 19 5q9 3 7 11-2 8-11 10-6 1-5-4-1-3-5-1-4-1-3-5z" fill="#cfe7f5" /><circle cx="6" cy="15" r="2.200" fill="#d8392b" /><circle cx="11" cy="10.500" r="2.200" fill="#4aa23c" /><circle cx="17" cy="8.500" r="2.200" fill="#f3b21c" /><circle cx="13" cy="17" r="2" fill="#233" /><path d="M25 4L16 27" stroke="#d98433" strokeWidth="2.600" /><path d="M22 5l2-5 6 3-4 4z" fill="#c79a6c" /></svg>
      </TaskApp>
      <ChevronUp className="ml-auto" size={24} strokeWidth={1.400} color="#fff" />
      <svg className="ml-[11px]" width="13" height="22" viewBox="0 0 13 22"><rect x="2.500" y="0" width="8" height="16" rx="1" fill="#fff" /><path d="M.7 12v4q0 2 2 2h7.600q2 0 2-2v-4M6.500 18v3.300M3 21.300h7" fill="none" stroke="#fff" strokeWidth="1.200" /></svg>
      <svg className="ml-[15px]" width="20" height="12" viewBox="0 0 20 12"><rect x=".7" y=".7" width="16.500" height="10.600" fill="none" stroke="#fff" strokeWidth="1.300" /><rect x="2.500" y="2.500" width="8" height="7" fill="#fff" /><rect x="18" y="3.500" width="2" height="5" fill="#fff" /></svg>
      <svg className="ml-[13px]" width="16" height="16" viewBox="0 0 16 16" fill="none" stroke="#fff" strokeWidth="1.200"><path d="M1 15Q1 3 15 1M4.500 15Q5 6.500 15 5M8 15q.5-5 7-6" /><circle cx="13" cy="14" r="1.600" fill="#fff" stroke="none" /></svg>
      <svg className="ml-[11px]" width="21" height="18" viewBox="0 0 21 18" fill="none" stroke="#fff" strokeWidth="1.200"><path d="M1 6.500h3L8 3v12l-4-3.500H1zM10.500 6.500q1.500 2.500 0 5M13.500 4.500q3 4.500 0 9M16.500 2q5 7 0 14" /></svg>
      <div className="ml-[6px] flex w-[80px] flex-col items-center text-[15px] leading-[23px] whitespace-nowrap">
        <span className="tracking-[-0.5px]">9:57 PM</span>
        <span className="tracking-[-0.45px]">30-May-22</span>
      </div>
      <svg className="mt-[6px] ml-[16px]" width="34" height="32" viewBox="0 0 34 32">
        <path d="M2 1h20v17H12l-4 4v-4H2z" fill="#fff" />
        <path d="M5 5.500h14M5 9.500h14M5 13.500h9" stroke="#223" strokeWidth="1.200" />
        <circle cx="22" cy="21" r="10" fill="#2d3335" stroke="#8e9496" />
        <text x="22" y="26" textAnchor="middle" fontFamily="Open Sans" fontSize="13.500" fill="#fff">1</text>
      </svg>
      <span className="mr-[5px] ml-[13px] h-[50px] w-px bg-[#60696d]" />
    </div>
  );
}

export default function App() {
  return (
    <div className="flex h-[1080px] w-[1920px] flex-col overflow-hidden font-['DejaVu_Sans',sans-serif] leading-none">
      <TabStrip />
      <AddressBar />
      <XfcePanel />
      <div className="relative h-[901px] shrink-0 overflow-hidden bg-gradient-to-b from-[#0a85ab] to-[#0a77a6]">
        <MainWindow />
        <Dialog />
        <Tooltip />
        <Dock />
      </div>
      <Taskbar />
    </div>
  );
}
